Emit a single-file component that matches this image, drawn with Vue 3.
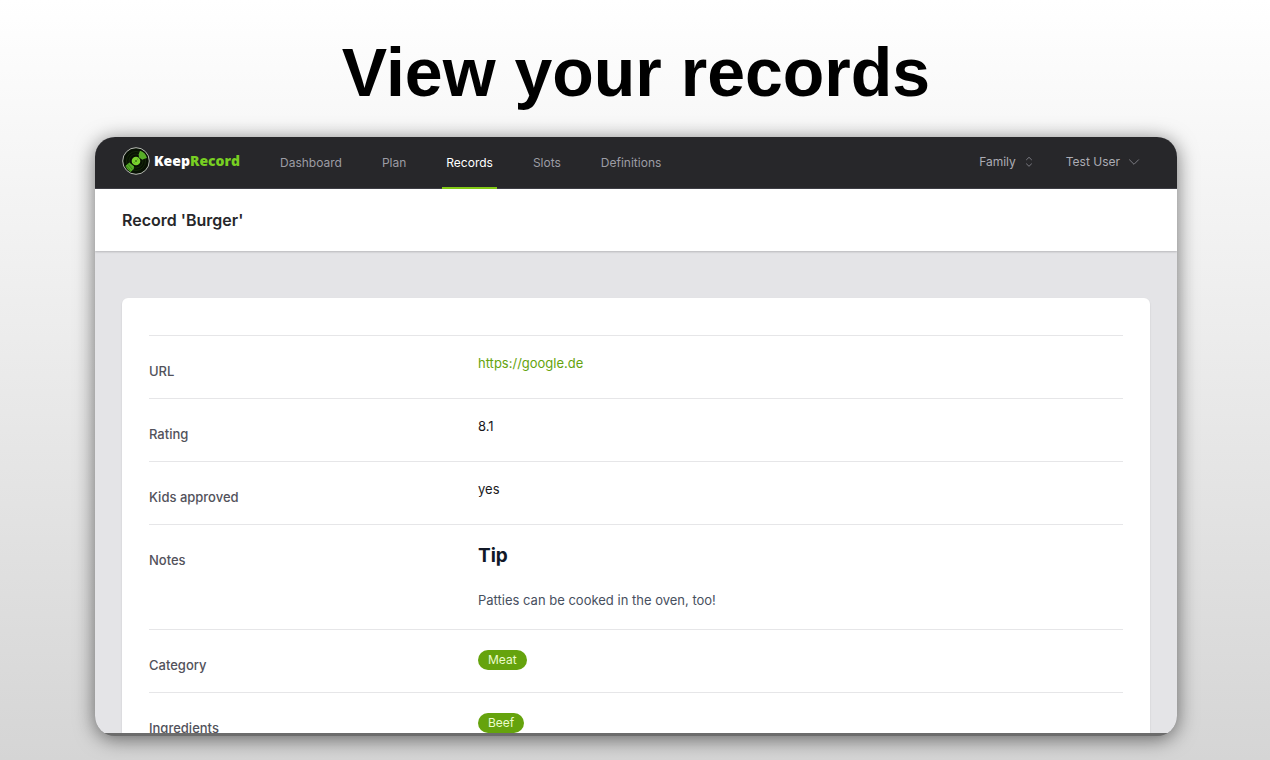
<script setup>
const navItems = ['Dashboard', 'Plan', 'Records', 'Slots', 'Definitions']
const active = 'Records'
const fields = [
  { label: 'URL', type: 'link', value: 'https://google.de' },
  { label: 'Rating', type: 'text', value: '8.1' },
  { label: 'Kids approved', type: 'text', value: 'yes' },
  { label: 'Notes', type: 'note', title: 'Tip', value: 'Patties can be cooked in the oven, too!' },
  { label: 'Category', type: 'badge', value: 'Meat' },
  { label: 'Ingredients', type: 'badge', value: 'Beef' },
]
</script>

<template>
  <div class="page">
    <h1 class="headline">View your records</h1>
    <div class="window">
      <div class="screen">
        <header class="topbar">
          <a href="#" class="brand">
            <svg class="disc" viewBox="0 0 28 28" aria-hidden="true">
              <circle cx="14" cy="14" r="13.3" fill="#071003" stroke="#b9bdb6" stroke-width="1" />
              <circle cx="14" cy="14" r="9.5" fill="none" stroke="#152809" stroke-width="1" />
              <circle cx="14" cy="14" r="7" fill="none" stroke="#152809" stroke-width="1" />
              <path d="M16.6 7.6 18 3.8Q23.4 5.4 25 11L21.8 12 20.4 12.8 17 10.6Z" fill="#57ad28" />
              <path d="M3.4 19 7.4 15.6 8.8 16.8 12 19.2 11.8 22 8.6 25 Q4.8 22.8 3.4 19Z" fill="#57ad28" />
              <path d="M6.2 17.4 10.4 22.4M4.6 19 8.4 23.6" stroke="#2b6811" stroke-width=".7" />
              <circle cx="14" cy="14" r="4.3" fill="#79d32d" />
              <circle cx="14" cy="14" r=".8" fill="#173808" />
              <path d="M12 15.4 12.7 16.1M15.4 12 16.1 12.7" stroke="#2b6811" stroke-width=".8" />
            </svg>
            <span class="wordmark">Keep<span class="accent">Record</span></span>
          </a>
          <nav class="nav">
            <a v-for="item in navItems" :key="item" href="#" class="nav-item" :class="{ active: item === active }">{{ item }}</a>
          </nav>
          <div class="menus">
            <button type="button" class="menu">
              Family
              <svg class="updown" viewBox="0 0 8 12" aria-hidden="true">
                <path d="M1.2 4 4 1.3 6.8 4M1.2 7.6 4 10.3 6.8 7.6" />
              </svg>
            </button>
            <button type="button" class="menu">
              Test User
              <svg class="chevron" viewBox="0 0 12 12" aria-hidden="true">
                <path d="M1.2 3.5 6 8.3 10.8 3.5" />
              </svg>
            </button>
          </div>
        </header>
        <div class="titlebar">
          <h2 class="title">Record 'Burger'</h2>
        </div>
        <main class="content">
          <dl class="card">
            <div v-for="f in fields" :key="f.label" class="row">
              <dt class="label">{{ f.label }}</dt>
              <dd class="value">
                <a v-if="f.type === 'link'" href="#" class="link">{{ f.value }}</a>
                <span v-else-if="f.type === 'badge'" class="badge">{{ f.value }}</span>
                <template v-else-if="f.type === 'note'">
                  <h3 class="note-title">{{ f.title }}</h3>
                  <p class="note-text">{{ f.value }}</p>
                </template>
                <template v-else>{{ f.value }}</template>
              </dd>
            </div>
          </dl>
        </main>
      </div>
    </div>
  </div>
</template>

<style>
body {
  margin: 0;
}
</style>

<style scoped>
.page {
  box-sizing: border-box;
  height: 100vh;
  display: flex;
  flex-direction: column;
  padding: 33px 93px 24px 95px;
  overflow: hidden;
  background: linear-gradient(#ffffff, #f7f7f7 18%, #d5d5d5);
  font-family: Inter, "Liberation Sans", sans-serif;
}
.headline {
  margin: 0 0 26px;
  font: bold 68px/78px "Liberation Sans", Arial, sans-serif;
  text-align: center;
  color: #000;
}
.window {
  flex: 1;
  min-height: 0;
  box-sizing: border-box;
  padding-bottom: 3px;
  border-radius: 20px;
  overflow: hidden;
  background: #6c6c6c;
  box-shadow: 0 3px 20px rgba(0, 0, 0, 0.55);
}
.screen {
  height: 100%;
  overflow: hidden;
  background: #e4e4e7;
}
.topbar {
  display: flex;
  height: 51px;
  padding: 0 37px 0 27px;
  background: #27272a;
  border-bottom: 1px solid #3f3f46;
}
.brand {
  display: flex;
  align-items: center;
  gap: 4px;
  width: 154px;
  padding-bottom: 3px;
  text-decoration: none;
}
.disc {
  width: 28px;
  height: 28px;
}
.wordmark {
  font: 800 14px/20px "Open Sans", sans-serif;
  color: #fff;
}
.accent {
  color: #78cf22;
}
.nav {
  display: flex;
  gap: 32px;
}
.nav-item {
  box-sizing: border-box;
  height: 52px;
  padding: 0 4px;
  font-size: 12px;
  line-height: 51px;
  font-weight: 400;
  color: #9c9ca4;
  text-decoration: none;
  border-bottom: 2px solid transparent;
}
.nav-item.active {
  color: #ffffff;
  border-bottom-color: #84cc16;
}
.menus {
  display: flex;
  gap: 32px;
  margin-left: auto;
}
.menu {
  display: flex;
  align-items: center;
  gap: 8px;
  padding: 0 0 2px;
  border: 0;
  background: none;
  font: 400 12px/16px Inter, sans-serif;
  color: #acacb4;
}
.menu svg {
  fill: none;
  stroke: #84848c;
  stroke-width: 0.9;
}
.updown {
  width: 10px;
  height: 12px;
}
.chevron {
  width: 12px;
  height: 12px;
}
.titlebar {
  position: relative;
  padding: 19px 27px;
  background: #fff;
  box-shadow: 0 1px 2px rgba(0, 0, 0, 0.2);
}
.title {
  margin: 0;
  font-size: 16px;
  line-height: 24px;
  font-weight: 600;
  color: #27272a;
}
.content {
  padding: 47px 27px;
}
.card {
  margin: 0;
  padding: 37px 27px;
  border-radius: 6px;
  background: #fff;
  box-shadow: 0 1px 2px rgba(0, 0, 0, 0.12);
}
.row {
  display: grid;
  grid-template-columns: repeat(3, 1fr);
  gap: 13px;
  padding: 18px 0;
  border-top: 1px solid #e6e6e8;
}
.label {
  padding-top: 8px;
  font-size: 13px;
  line-height: 18px;
  font-weight: 500;
  color: #52525b;
}
.value {
  grid-column: span 2;
  margin: 0;
  font-size: 13px;
  line-height: 18px;
  color: #18181b;
}
.link {
  color: #65a30d;
  text-decoration: none;
}
.note-title {
  margin: 0 0 22px;
  font-size: 19px;
  line-height: 25px;
  font-weight: 700;
  color: #111827;
}
.note-text {
  margin: 0;
  font-size: 13px;
  line-height: 21px;
  color: #475060;
}
.badge {
  display: inline-block;
  margin-top: 2px;
  padding: 0 10px;
  border-radius: 10px;
  background: #65a30d;
  font-size: 12px;
  line-height: 20px;
  color: #ecfccb;
}
</style>
